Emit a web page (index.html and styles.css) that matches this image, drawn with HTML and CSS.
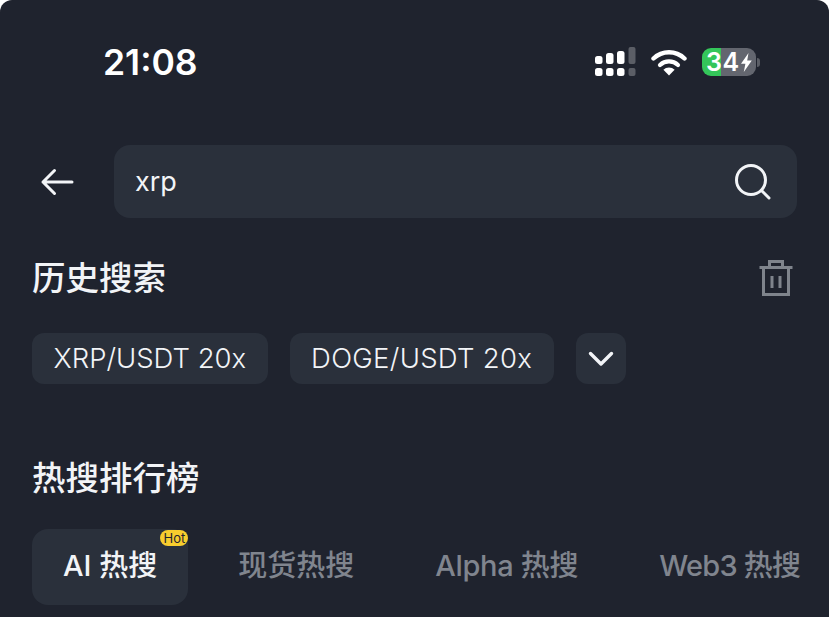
FILE: index.html
```html
<!DOCTYPE html>
<html lang="zh-CN">
<head>
  <meta charset="UTF-8">
  <meta name="viewport" content="width=device-width, initial-scale=1.0">
  <title>搜索</title>
  <link rel="stylesheet" href="styles.css">
</head>
<body>

<div class="screen">
  <div class="status-bar">
    <span class="time">21:08</span>
    <div class="status-icons">
      <svg class="signal" width="41" height="30" viewBox="0 0 41 30">
        <rect x="0" y="9" width="7.500" height="8" rx="2.500" fill="#fff"/>
        <rect x="11" y="6" width="7.500" height="11" rx="2.500" fill="#fff"/>
        <rect x="22" y="4" width="7.500" height="13" rx="2.500" fill="#fff"/>
        <rect x="33.500" y="0" width="7" height="17" rx="2" fill="#5b5e66"/>
        <rect x="0" y="21" width="7.500" height="8" rx="2.500" fill="#fff"/>
        <rect x="11" y="21" width="7.500" height="8" rx="2.500" fill="#fff"/>
        <rect x="22" y="21" width="7.500" height="8" rx="2.500" fill="#fff"/>
        <rect x="33.500" y="21" width="7" height="8" rx="2" fill="#5b5e66"/>
      </svg>
      <svg class="wifi" width="36" height="28" viewBox="0 0 36 28">
        <path d="M2.500 10.500a22.500 22.500 0 0 1 31 0" fill="none" stroke="#fff" stroke-width="4.400" stroke-linecap="round"/>
        <path d="M9 17a13.200 13.200 0 0 1 18 0" fill="none" stroke="#fff" stroke-width="4.200" stroke-linecap="round"/>
        <path d="M18 27.500l-5.600-5.800a8 8 0 0 1 11.200 0z" fill="#fff"/>
      </svg>
      <div class="battery">
        <div class="battery-body">
          <span class="battery-num">34</span>
          <svg class="bolt" width="13" height="19" viewBox="0 0 13 19">
            <path d="M8.500 0L1 10.800h4.400L3.800 19l8-11.600H7.200z" fill="#fff"/>
          </svg>
        </div>
        <span class="battery-cap"></span>
      </div>
    </div>
  </div>

  <div class="search-row">
    <svg class="back" width="34" height="28" viewBox="0 0 34 28">
      <path d="M32 14H3M14.500 2.500L3 14l11.500 11.500" fill="none" stroke="#f2f4f7" stroke-width="3" stroke-linecap="round" stroke-linejoin="round"/>
    </svg>
    <div class="search-box">
      <span class="search-text">xrp</span>
      <svg width="38" height="38" viewBox="0 0 38 38">
        <circle cx="17" cy="17" r="14.500" fill="none" stroke="#f2f4f7" stroke-width="3"/>
        <path d="M27.500 27.500L35 35" fill="none" stroke="#f2f4f7" stroke-width="3" stroke-linecap="round"/>
      </svg>
    </div>
  </div>

  <div class="section-head">
    <h2>历史搜索</h2>
    <svg width="36" height="38" viewBox="0 0 36 38">
      <path d="M1.500 8.500H34.500M11.500 8V2.500H24.500V8M5.500 9V35.500H30.500V9M14 17V29M22 17V29" fill="none" stroke="#7f848c" stroke-width="3"/>
    </svg>
  </div>

  <div class="chips">
    <span class="chip">XRP/USDT 20x</span>
    <span class="chip chip-wide">DOGE/USDT 20x</span>
    <span class="chip chip-more">
      <svg width="26" height="16" viewBox="0 0 26 16">
        <path d="M2.500 2.500L13 13 23.500 2.500" fill="none" stroke="#f2f4f7" stroke-width="3.400" stroke-linecap="round" stroke-linejoin="round"/>
      </svg>
    </span>
  </div>

  <h2 class="rank-title">热搜排行榜</h2>

  <div class="tabs">
    <div class="tab tab-active">
      AI 热搜
      <span class="hot">Hot</span>
    </div>
    <div class="tab">现货热搜</div>
    <div class="tab tab-latin">Alpha 热搜</div>
    <div class="tab tab-tight">Web3 热搜</div>
  </div>
</div>

</body>
</html>
```

FILE: styles.css
```css
html, body {
  margin: 0;
  height: 100%;
  background-color: #fff;
}

body {
  font-family: Inter, "Noto Sans CJK SC", sans-serif;
  color: #f2f4f7;
  overflow: hidden;
}

h2 {
  margin: 0;
  font-size: 33.5px;
  font-weight: 500;
  line-height: 44px;
}

.screen {
  height: 617px;
  box-sizing: border-box;
  padding: 0 32px;
  background-color: #1f232e;
  border-radius: 12px 12px 0 0;
  overflow: hidden;
}

.status-bar {
  display: flex;
  justify-content: space-between;
  align-items: center;
  height: 46px;
  padding: 39px 37px 0 71px;
}

.time {
  font-size: 35.500px;
  font-weight: 600;
  color: #fff;
}

.status-icons {
  display: flex;
  align-items: center;
  gap: 15px;
}

.battery {
  display: flex;
  align-items: center;
}

.battery-body {
  display: flex;
  align-items: center;
  box-sizing: border-box;
  width: 54px;
  height: 28px;
  padding-left: 4px;
  border-radius: 9px;
  background: linear-gradient(to right, #34c65a 0 19px, #63666f 19px);
}

.battery-num {
  font-size: 25px;
  font-weight: 600;
  letter-spacing: 0.5px;
  color: #fff;
}

.bolt {
  flex-shrink: 0;
}

.battery-cap {
  width: 3px;
  height: 9px;
  margin-left: 1px;
  border-radius: 0 3px 3px 0;
  background-color: #5b5e66;
}

.search-row {
  display: flex;
  align-items: center;
  gap: 40px;
  margin-top: 60px;
  padding-left: 8px;
}

.search-box {
  flex: 1;
  display: flex;
  justify-content: space-between;
  align-items: center;
  height: 73px;
  padding: 0 25px 0 21px;
  border-radius: 16px;
  background-color: #2a303b;
}

.search-text {
  font-size: 27px;
}

.section-head {
  display: flex;
  justify-content: space-between;
  align-items: center;
  margin-top: 38px;
  padding-right: 3px;
}

.chips {
  display: flex;
  gap: 22px;
  margin-top: 33px;
}

.chip {
  display: flex;
  align-items: center;
  box-sizing: border-box;
  height: 51px;
  padding: 0 21.500px 2px;
  border-radius: 12px;
  background-color: #2a303b;
  font-size: 27.500px;
  font-weight: 300;
  white-space: nowrap;
}

.chip-wide {
  letter-spacing: 0.3px;
}

.chip-more {
  padding: 0 12px;
}

.rank-title {
  margin-top: 72px;
}

.tabs {
  display: flex;
  align-items: center;
  gap: 19px;
  margin-top: 29px;
  margin-right: -32px;
  white-space: nowrap;
}

.tab {
  padding: 18px 31px 20px;
  font-size: 29px;
  font-weight: 500;
  line-height: 38px;
  color: #80858e;
}

.tab-latin {
  letter-spacing: -0.3px;
}

.tab-tight {
  letter-spacing: -0.8px;
}

.tab-active {
  position: relative;
  border-radius: 16px;
  background-color: #2a303b;
  color: #f2f4f7;
}

.hot {
  position: absolute;
  top: 1px;
  right: 0;
  padding: 0 3px;
  border-radius: 8px;
  background-color: #f8cd2e;
  color: #1f232e;
  font-size: 13px;
  font-weight: 400;
  line-height: 16px;
}
```
